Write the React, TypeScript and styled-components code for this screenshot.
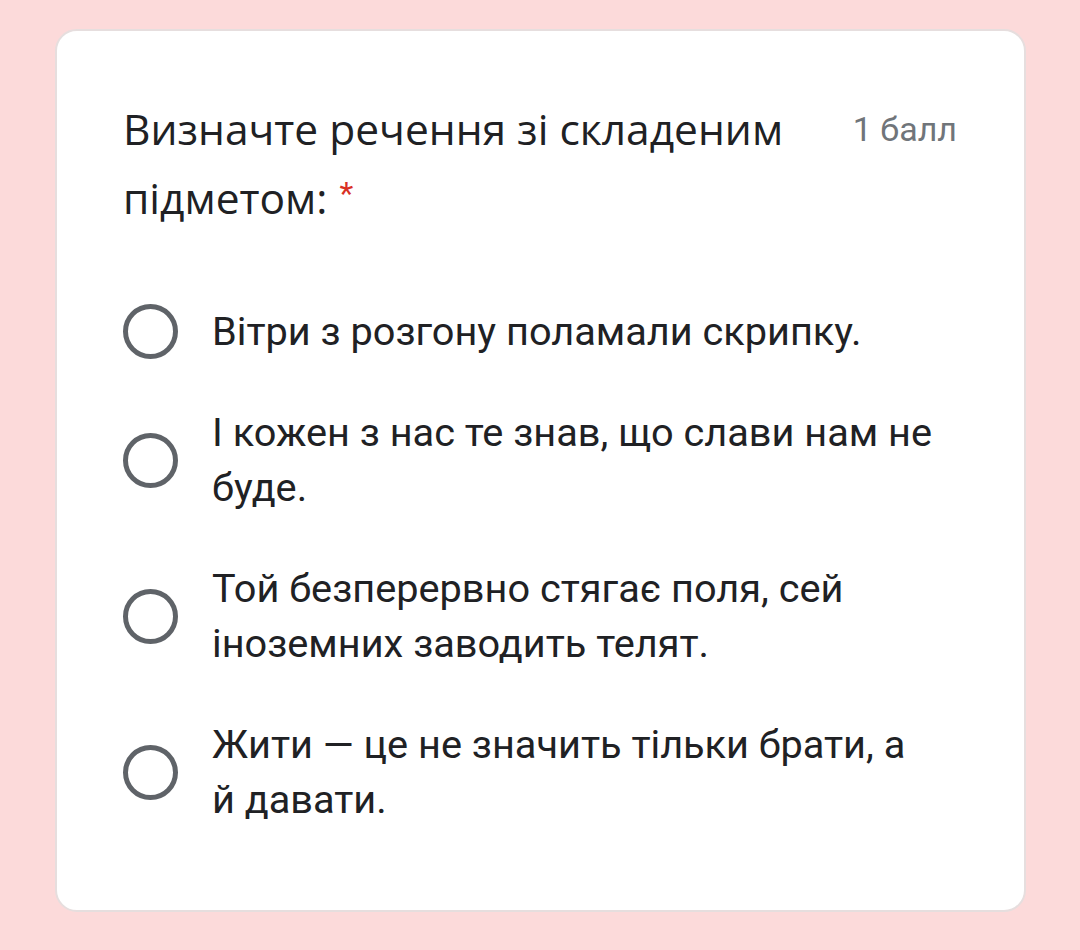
import React from "react";
import styled, { createGlobalStyle } from "styled-components";

const Global = createGlobalStyle`
  html, body { margin: 0; padding: 0; background: #fcdada; }
  body { font-family: Roboto, "Liberation Sans", sans-serif; }
`;

const Page = styled.div`
  width: 1080px;
  height: 950px;
  padding: 29px 54px 0 55px;
  box-sizing: border-box;
  background: #fcdada;
`;

const Card = styled.div`
  background: #ffffff;
  border: 2px solid #e6dede;
  border-radius: 22px;
  height: 883px;
  box-sizing: border-box;
  padding: 66px 67px 0 66px;
`;

const Header = styled.div`
  display: flex;
  align-items: flex-start;
  justify-content: space-between;
`;

const Title = styled.div`
  font-family: "Open Sans", "Noto Sans", sans-serif;
  font-size: 42.5px;
  line-height: 64px;
  color: #202124;
  width: 690px;
`;

const Star = styled.span`
  color: #d93025;
  font-family: Roboto, sans-serif;
  font-size: 32px;
  margin-left: 12px;
  vertical-align: 10px;
`;

const Points = styled.div`
  font-family: Roboto, sans-serif;
  font-size: 34px;
  line-height: 64px;
  color: #70757a;
  white-space: nowrap;
`;

const Options = styled.div`
  display: flex;
  flex-direction: column;
  gap: 46px;
  margin-top: 74px;
`;

const Option = styled.label`
  display: flex;
  align-items: center;
  gap: 34px;
`;

const Radio = styled.span`
  flex: none;
  width: 55px;
  height: 55px;
  box-sizing: border-box;
  border: 5px solid #5f6368;
  border-radius: 50%;
`;

const OptionText = styled.div`
  font-family: Roboto, sans-serif;
  font-size: 39.7px;
  line-height: 55px;
  color: #202124;
`;

const options: string[][] = [
  ["Вітри з розгону поламали скрипку."],
  ["І кожен з нас те знав, що слави нам не", "буде."],
  ["Той безперервно стягає поля, сей", "іноземних заводить телят."],
  ["Жити — це не значить тільки брати, а", "й давати."],
];

export default function App() {
  return (
    <>
      <Global />
      <Page>
        <Card>
          <Header>
            <Title>
              Визначте речення зі складеним підметом:<Star>*</Star>
            </Title>
            <Points>1 балл</Points>
          </Header>
          <Options>
            {options.map((lines, i) => (
              <Option key={i}>
                <Radio />
                <OptionText>
                  {lines.map((l, j) => (
                    <React.Fragment key={j}>
                      {j > 0 && <br />}
                      {l}
                    </React.Fragment>
                  ))}
                </OptionText>
              </Option>
            ))}
          </Options>
        </Card>
      </Page>
    </>
  );
}
